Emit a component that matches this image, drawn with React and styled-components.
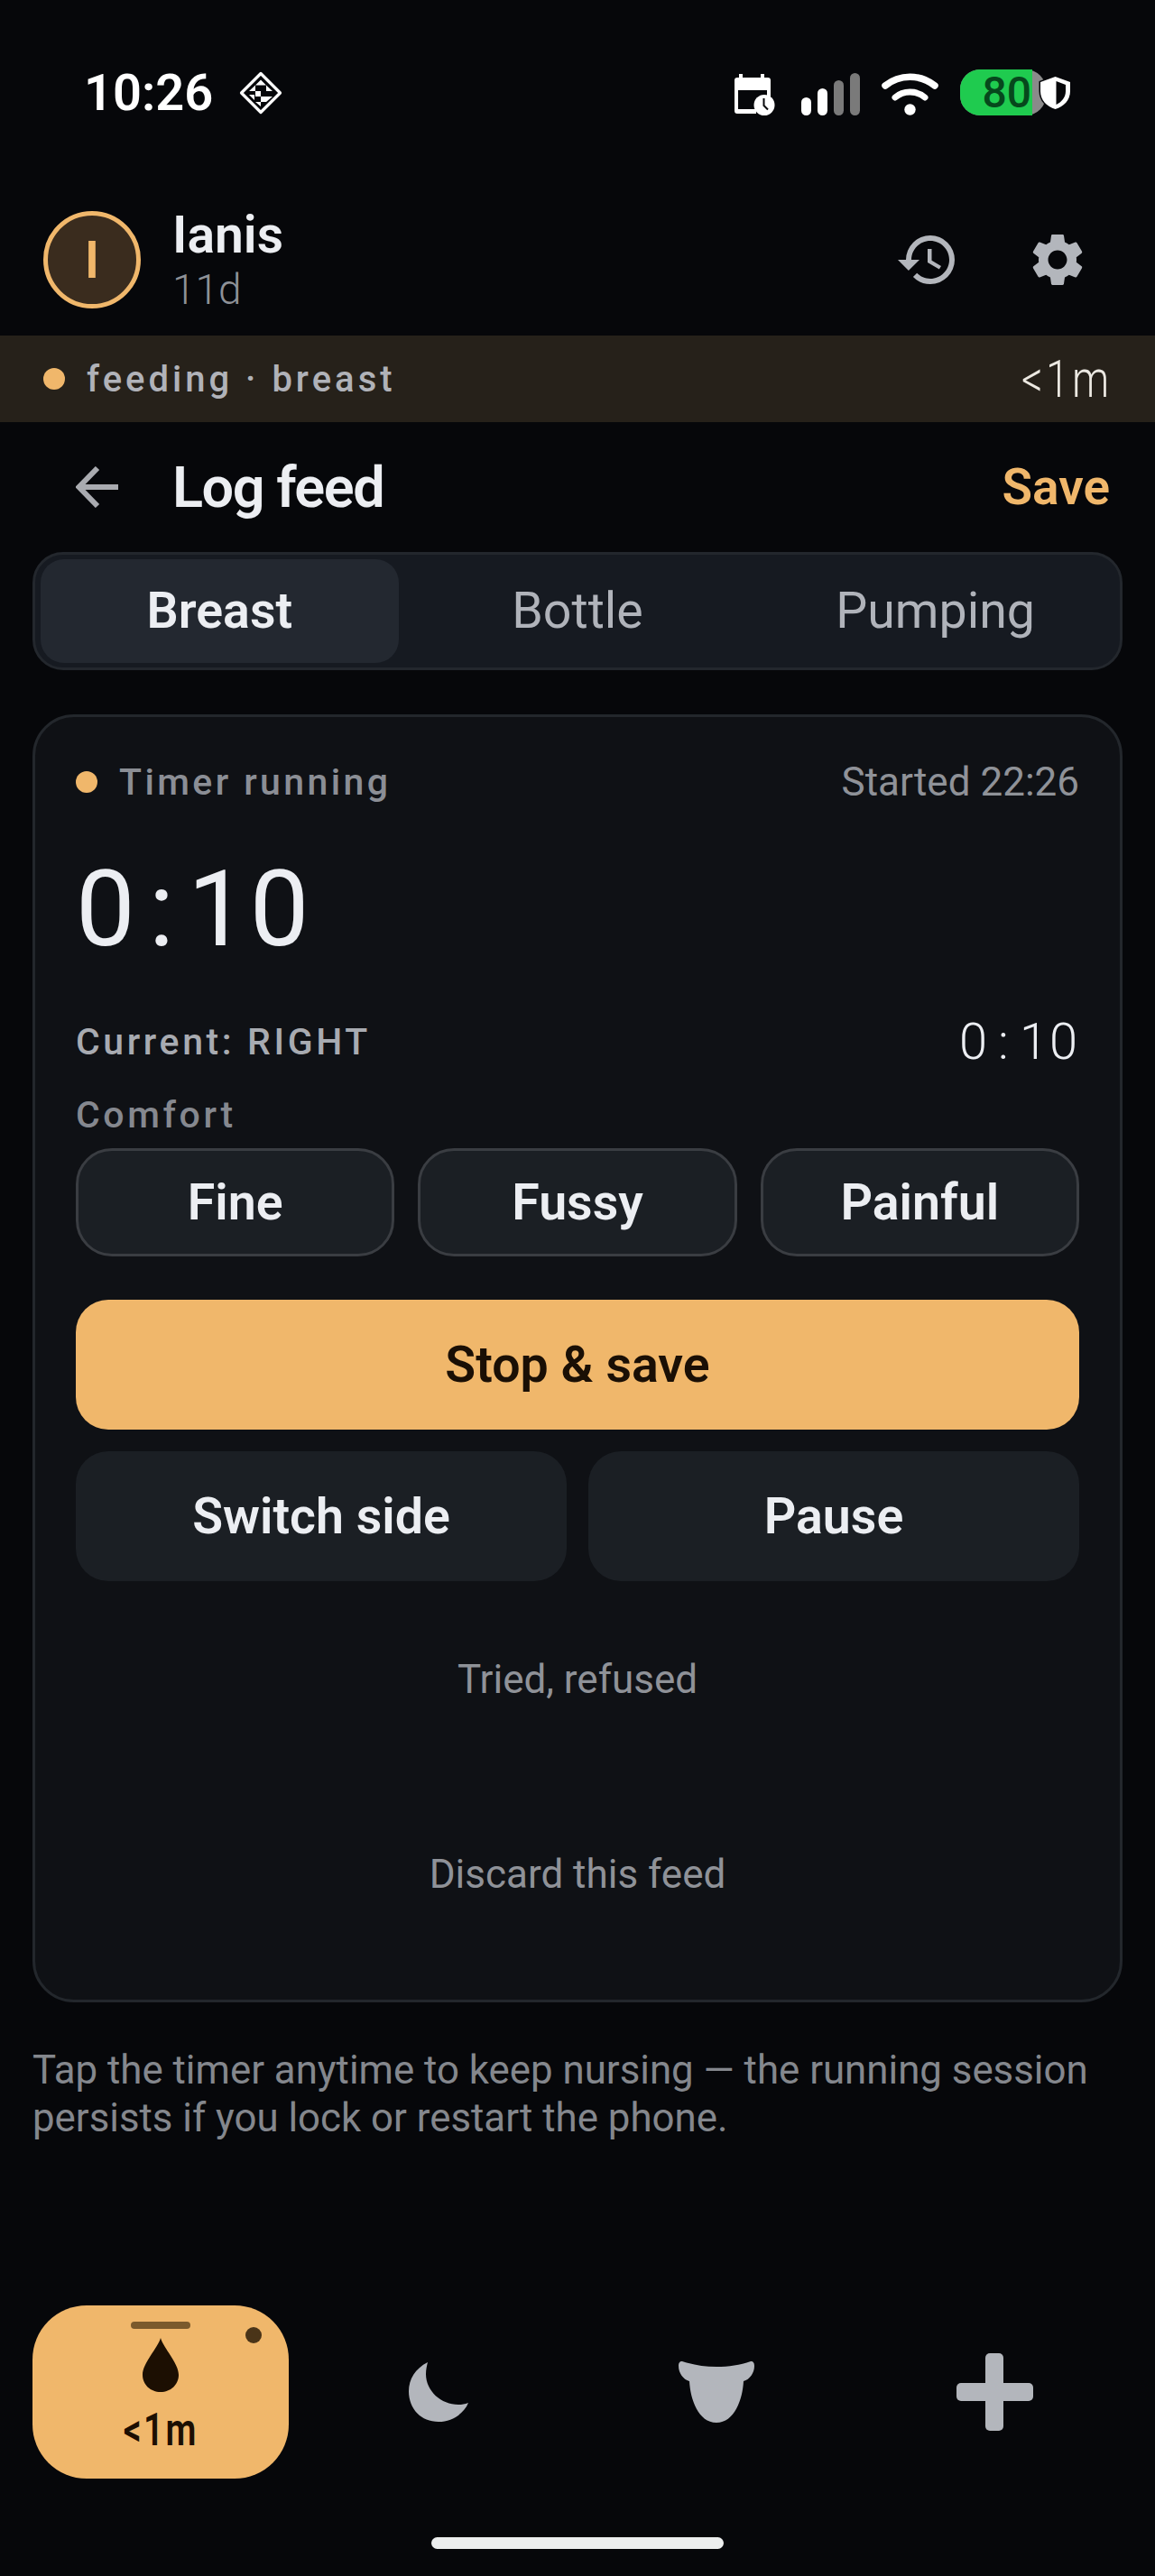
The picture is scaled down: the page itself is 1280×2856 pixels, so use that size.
// styled
import styled, { createGlobalStyle } from 'styled-components';

// icons
import { MdHistory, MdSettings } from 'react-icons/md';

const AMBER = '#f0b76b';

const GlobalStyle = createGlobalStyle`
	html, body {
		margin: 0;
		padding: 0;
		background: #06070a;
	}
	* {
		box-sizing: border-box;
	}
`;

const DiamondIcon = () => (
	<svg width="48" height="48" viewBox="0 0 48 48" fill="none">
		<path d="M24 2.5 45.5 24 24 45.5 2.5 24Z" stroke="#fff" strokeWidth="3.2" strokeLinejoin="round" />
		<path d="M24 9.5 30 15.5H18ZM11 22l7-6.5V22ZM37 22l-7-6.5V22ZM18 22h6v6h-6ZM24 28h6v6h-6ZM18 34l6 5 0-5ZM30 28h7l-7 6ZM11 26h6v6Z" fill="#fff" />
	</svg>
);

const CalendarIcon = () => (
	<svg width="46" height="46" viewBox="0 0 46 46" fill="none">
		<path d="M6 0h4v4h20V0h4v4h4a3 3 0 0 1 3 3v20h-4v-9H5v21h20v5H4a3 3 0 0 1-3-3V7a3 3 0 0 1 3-3h2Z" fill="#fff" />
		<circle cx="34" cy="34.5" r="11.5" fill="#fff" />
		<path d="M33.5 27v8l4.5 4.5" stroke="#06070a" strokeWidth="2" fill="none" />
	</svg>
);

const WifiIcon = () => (
	<svg width="63" height="47" viewBox="0 0 63 47" fill="none">
		<path d="M4 14C20 1 43 1 59 14" stroke="#fff" strokeWidth="7.5" strokeLinecap="round" />
		<path d="M15 27C24 19 39 19 48 27" stroke="#fff" strokeWidth="7" strokeLinecap="round" />
		<circle cx="31.5" cy="40.5" r="6.2" fill="#fff" />
	</svg>
);

const ShieldIcon = () => (
	<svg width="37" height="40" viewBox="-2 -2 37 40">
		<path d="M16.5 0 33 6v10c0 10-7 17-16.5 20C7 33 0 26 0 16V6Z" fill="#fff" stroke="#06070a" strokeWidth="3" paintOrder="stroke" />
		<path d="M17.5 5 28 9v7c0 7-4.500 12-10.500 15Z" fill="#06070a" />
	</svg>
);

const BackIcon = () => (
	<svg width="48" height="46" viewBox="0 0 48 46" fill="none">
		<path d="M47 23H4M24 2 3.500 23 24 44" stroke="#a9abb0" strokeWidth="6" />
	</svg>
);

const DropIcon = () => (
	<svg width="40" height="60" viewBox="0 0 40 60">
		<path d="M20 0C23 11 40 28 40 41 40 52 31 60 20 60S0 52 0 41C0 28 17 11 20 0Z" fill="#1c0f02" />
	</svg>
);

const MoonIcon = () => (
	<svg width="66" height="66" viewBox="0 0 66 66">
		<path d="M21 0C7 7 0 19 0 32 0 52 14 66 33 66 48 66 61 57 66 45 62 46.500 59 47 55 47 36 47 19 32 19 13 19 8 20 4 21 0Z" fill="#b3b6bc" />
	</svg>
);

const BreastIcon = () => (
	<svg width="84" height="68" viewBox="0 0 84 68">
		<path d="M4 0C16 4 28 6 42 6 56 6 68 4 80 0 83 0 84 2 84 5 84 13 79 20 72 22 71 42 62 68 42 68 22 68 13 42 12 22 5 20 0 13 0 5 0 2 1 0 4 0Z" fill="#b3b6bc" />
	</svg>
);

const PlusIcon = () => (
	<svg width="85" height="86" viewBox="0 0 85 86" fill="#b3b6bc">
		<rect x="32" y="0" width="20" height="86" rx="5" />
		<rect x="0" y="33" width="85" height="20" rx="5" />
	</svg>
);

const App = () => {
	return (
		<StyledPage>
			<GlobalStyle />
			<StatusBar>
				<StatusLeft>
					<Clock>10:26</Clock>
					<DiamondIcon />
				</StatusLeft>
				<StatusRight>
					<CalendarIcon />
					<Signal>
						<SignalBar $height={20} $on />
						<SignalBar $height={30} $on />
						<SignalBar $height={39} />
						<SignalBar $height={47} />
					</Signal>
					<WifiIcon />
					<Battery>
						<BatteryFill>80</BatteryFill>
						<ShieldSpot><ShieldIcon /></ShieldSpot>
					</Battery>
				</StatusRight>
			</StatusBar>

			<ProfileRow>
				<Avatar>I</Avatar>
				<ProfileText>
					<ProfileName>Ianis</ProfileName>
					<ProfileAge>11d</ProfileAge>
				</ProfileText>
				<ProfileIcons>
					<MdHistory size={72} color="#b3b6bc" />
					<MdSettings size={70} color="#b3b6bc" />
				</ProfileIcons>
			</ProfileRow>

			<Banner>
				<BannerLabel>
					<Dot />
					<BannerText>feeding · breast</BannerText>
				</BannerLabel>
				<BannerTime>&lt;1m</BannerTime>
			</Banner>

			<NavRow>
				<BackIcon />
				<NavTitle>Log feed</NavTitle>
				<NavSave>Save</NavSave>
			</NavRow>

			<Tabs>
				<Tab $active>Breast</Tab>
				<Tab>Bottle</Tab>
				<Tab>Pumping</Tab>
			</Tabs>

			<Card>
				<TimerHead>
					<BannerLabel>
						<Dot />
						<TimerLabel>Timer running</TimerLabel>
					</BannerLabel>
					<Started>Started 22:26</Started>
				</TimerHead>
				<BigTimer>0<BigColon>:</BigColon>10</BigTimer>
				<SideRow>
					<SideLabel>Current: RIGHT</SideLabel>
					<SideTimer>0<SideColon>:</SideColon>10</SideTimer>
				</SideRow>
				<ComfortLabel>Comfort</ComfortLabel>
				<ComfortRow>
					<ComfortButton>Fine</ComfortButton>
					<ComfortButton>Fussy</ComfortButton>
					<ComfortButton>Painful</ComfortButton>
				</ComfortRow>
				<StopButton>Stop &amp; save</StopButton>
				<ActionRow>
					<ActionButton>Switch side</ActionButton>
					<ActionButton>Pause</ActionButton>
				</ActionRow>
				<TextLink $gap={79}>Tried, refused</TextLink>
				<TextLink $gap={156}>Discard this feed</TextLink>
			</Card>

			<Hint>Tap the timer anytime to keep nursing — the running session persists if you lock or restart the phone.</Hint>

			<BottomNav>
				<ActivePill>
					<PillBar />
					<PillDot />
					<DropIcon />
					<PillTime>&lt;1m</PillTime>
				</ActivePill>
				<NavItem><MoonIcon /></NavItem>
				<NavItem><BreastIcon /></NavItem>
				<NavItem><PlusIcon /></NavItem>
			</BottomNav>

			<HomeIndicator />
		</StyledPage>
	);
};

const StyledPage = styled.div`
	display: flex;
	flex-direction: column;
	width: 1280px;
	height: 2856px;
	overflow: hidden;
	background: #06070a;
	font-family: Roboto, "Liberation Sans", sans-serif;
`;

const StatusBar = styled.div`
	display: flex;
	justify-content: space-between;
	align-items: flex-start;
	height: 234px;
	padding: 77px 121px 0 93px;
`;

const StatusLeft = styled.div`
	display: flex;
	align-items: center;
	gap: 29px;
	height: 52px;
`;

const Clock = styled.div`
	font-size: 56px;
	font-weight: 600;
	color: #fff;
	line-height: 52px;
`;

const StatusRight = styled.div`
	display: flex;
	align-items: flex-end;
	gap: 24px;
	height: 51px;
`;

const Signal = styled.div`
	display: flex;
	align-items: flex-end;
	gap: 7px;
	height: 47px;
	margin-left: 5px;
`;

const SignalBar = styled.div`
	width: 11px;
	height: ${props => props.$height}px;
	border-radius: 6px;
	background: ${props => props.$on ? '#fff' : '#7a7a7a'};
`;

const Battery = styled.div`
	position: relative;
	width: 95px;
	height: 51px;
	border-radius: 22px;
	background: #8a8a8a;
`;

const BatteryFill = styled.div`
	width: 80px;
	height: 51px;
	border-radius: 22px 0 0 22px;
	background: #1fcb4f;
	color: #06481c;
	font-size: 48px;
	font-weight: 500;
	line-height: 52px;
	text-align: right;
	padding-right: 1px;
`;

const ShieldSpot = styled.div`
	position: absolute;
	left: 87px;
	top: 6px;
	line-height: 0;
`;

const ProfileRow = styled.div`
	display: flex;
	align-items: flex-start;
	height: 138px;
	padding: 0 73px 0 48px;
`;

const Avatar = styled.div`
	display: flex;
	align-items: center;
	justify-content: center;
	width: 108px;
	height: 108px;
	border: 5px solid ${AMBER};
	border-radius: 50%;
	background: #3a2c1e;
	color: ${AMBER};
	font-size: 57px;
	font-weight: 600;
`;

const ProfileText = styled.div`
	display: flex;
	flex-direction: column;
	margin: -3px 0 0 35px;
	flex: 1;
`;

const ProfileName = styled.div`
	font-size: 57px;
	font-weight: 600;
	color: #eceef2;
	line-height: 60px;
`;

const ProfileAge = styled.div`
	margin-top: 3px;
	font-size: 46px;
	font-weight: 300;
	color: #8e9197;
	line-height: 54px;
`;

const ProfileIcons = styled.div`
	display: flex;
	align-items: center;
	gap: 73px;
	height: 108px;
`;

const Banner = styled.div`
	display: flex;
	align-items: center;
	justify-content: space-between;
	height: 96px;
	padding: 0 48px;
	background: #26211a;
`;

const BannerLabel = styled.div`
	display: flex;
	align-items: center;
	gap: 24px;
`;

const Dot = styled.div`
	width: 24px;
	height: 24px;
	border-radius: 50%;
	background: ${AMBER};
`;

const BannerText = styled.div`
	font-size: 40px;
	font-weight: 500;
	letter-spacing: 4px;
	color: #b0b2b8;
`;

const BannerTime = styled.div`
	font-size: 58px;
	font-weight: 300;
	letter-spacing: 4px;
	color: #ece9e2;
	transform: scaleX(0.8);
	transform-origin: right center;
`;

const NavRow = styled.div`
	display: flex;
	align-items: center;
	height: 144px;
	padding: 0 50px 0 84px;
`;

const NavTitle = styled.div`
	flex: 1;
	margin-left: 59px;
	font-size: 63px;
	font-weight: 600;
	letter-spacing: -1.5px;
	color: #eceef2;
`;

const NavSave = styled.div`
	font-size: 55px;
	font-weight: 600;
	color: ${AMBER};
`;

const Tabs = styled.div`
	display: grid;
	grid-template-columns: repeat(3, 1fr);
	height: 131px;
	margin: 0 36px;
	padding: 5px 6px;
	border: 3px solid #23272d;
	border-radius: 34px;
	background: #161a21;
`;

const Tab = styled.div`
	display: flex;
	align-items: center;
	justify-content: center;
	border-radius: 26px;
	font-size: 55.5px;
	font-weight: ${props => props.$active ? 600 : 400};
	color: ${props => props.$active ? '#eceef2' : '#b0b3ba'};
	background: ${props => props.$active ? '#232830' : 'transparent'};
`;

const Card = styled.div`
	display: flex;
	flex-direction: column;
	height: 1428px;
	margin: 49px 36px 0;
	padding: 47px 45px 0;
	border: 3px solid #23272c;
	border-radius: 46px;
	background: #0f1115;
`;

const TimerHead = styled.div`
	display: flex;
	align-items: center;
	justify-content: space-between;
	height: 50px;
`;

const TimerLabel = styled.div`
	font-size: 41px;
	font-weight: 500;
	letter-spacing: 3.4px;
	color: #8b8e95;
`;

const Started = styled.div`
	font-size: 44px;
	font-weight: 400;
	color: #8f9298;
`;

const BigTimer = styled.div`
	height: 120px;
	margin-top: 56px;
	font-size: 117px;
	font-weight: 400;
	line-height: 120px;
	letter-spacing: 3px;
	color: #eceef2;
`;

const BigColon = styled.span`
	margin: 0 12px;
`;

const SideRow = styled.div`
	display: flex;
	align-items: center;
	justify-content: space-between;
	height: 60px;
	margin-top: 57px;
`;

const SideLabel = styled.div`
	font-size: 41px;
	font-weight: 500;
	letter-spacing: 3.6px;
	color: #a8abb1;
`;

const SideTimer = styled.div`
	font-size: 56px;
	font-weight: 300;
	letter-spacing: 2px;
	color: #eceef2;
`;

const SideColon = styled.span`
	margin: 0 10px;
`;

const ComfortLabel = styled.div`
	height: 50px;
	margin-top: 26px;
	font-size: 41px;
	font-weight: 500;
	line-height: 50px;
	letter-spacing: 3.6px;
	color: #85888f;
`;

const ComfortRow = styled.div`
	display: grid;
	grid-template-columns: repeat(3, 1fr);
	gap: 26px;
	margin-top: 12px;
`;

const ComfortButton = styled.div`
	display: flex;
	align-items: center;
	justify-content: center;
	height: 120px;
	border: 3px solid #3a3d42;
	border-radius: 40px;
	background: #1b1f24;
	font-size: 55.5px;
	font-weight: 600;
	color: #eceef2;
`;

const StopButton = styled.div`
	display: flex;
	align-items: center;
	justify-content: center;
	height: 144px;
	margin-top: 48px;
	border-radius: 36px;
	background: ${AMBER};
	font-size: 55.5px;
	font-weight: 600;
	color: #1a0f05;
`;

const ActionRow = styled.div`
	display: grid;
	grid-template-columns: repeat(2, 1fr);
	gap: 24px;
	margin-top: 24px;
`;

const ActionButton = styled.div`
	display: flex;
	align-items: center;
	justify-content: center;
	height: 144px;
	border-radius: 36px;
	background: #1b1f24;
	font-size: 55.5px;
	font-weight: 600;
	color: #eceef2;
`;

const TextLink = styled.div`
	height: 60px;
	margin-top: ${props => props.$gap}px;
	font-size: 44px;
	font-weight: 400;
	line-height: 60px;
	text-align: center;
	color: #8f9298;
`;

const Hint = styled.div`
	margin: 49px 36px 0;
	font-size: 43.8px;
	font-weight: 400;
	line-height: 53px;
	color: #84878d;
`;

const BottomNav = styled.div`
	display: grid;
	grid-template-columns: repeat(4, 1fr);
	gap: 24px;
	margin-top: auto;
	padding: 0 36px;
`;

const NavItem = styled.div`
	display: flex;
	align-items: center;
	justify-content: center;
	height: 192px;
`;

const ActivePill = styled.div`
	position: relative;
	display: flex;
	flex-direction: column;
	align-items: center;
	height: 192px;
	padding-top: 36px;
	border-radius: 60px;
	background: ${AMBER};
`;

const PillBar = styled.div`
	position: absolute;
	top: 18px;
	left: 109px;
	width: 66px;
	height: 8px;
	border-radius: 4px;
	background: #7b5a2c;
`;

const PillDot = styled.div`
	position: absolute;
	top: 24px;
	right: 30px;
	width: 18px;
	height: 18px;
	border-radius: 50%;
	background: #4a3418;
`;

const PillTime = styled.div`
	margin-top: 16px;
	font-size: 50px;
	font-weight: 600;
	line-height: 52px;
	letter-spacing: 3px;
	color: #1c0f02;
	transform: scaleX(0.78);
`;

const HomeIndicator = styled.div`
	width: 324px;
	height: 13px;
	margin: 65px auto 30px;
	border-radius: 7px;
	background: #eceeee;
`;

export default App;
